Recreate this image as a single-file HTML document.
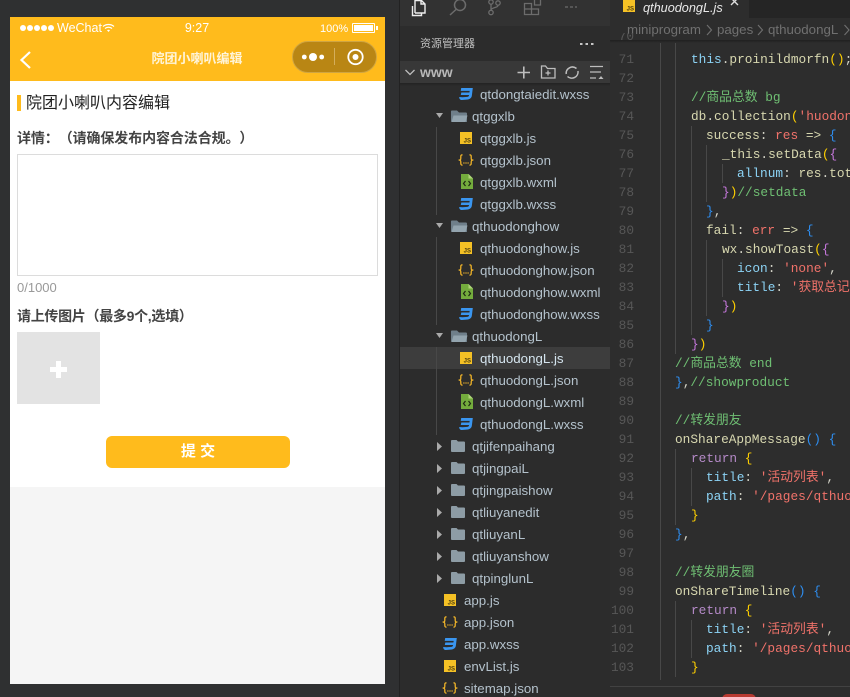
<!DOCTYPE html>
<html><head><meta charset="utf-8">
<style>
html,body{margin:0;padding:0;width:850px;height:697px;overflow:hidden;background:#2f3031}
*{box-sizing:border-box}
.a{position:absolute}
body{font-family:"Liberation Sans","Noto Sans CJK SC",sans-serif;position:relative;text-spacing-trim:space-all}
.t{position:absolute;white-space:nowrap;line-height:22px;height:20px;font-size:13.3px;color:#b4c2cc}
.ic{position:absolute;width:14px;height:14px}
.c{position:absolute;white-space:pre;font-family:"Liberation Mono","Noto Sans CJK SC",monospace;font-size:12.8px;line-height:19px;height:19px;color:#d4d4c8}
.n{position:absolute;left:600px;width:34px;text-align:right;font-family:"Liberation Mono",monospace;font-size:12.8px;line-height:19px;height:19px;color:#575757}
.g{position:absolute;width:1px;background:#484848}
.k{color:#b58ac8}.p{color:#8cd3f5}.s{color:#f0726a}.m{color:#6fbf73}.b{color:#2e8ef0}.y{color:#ffd000}.f{color:#d8d8b0}.v{color:#f0726a}.o{color:#c678dd}
.bc{position:absolute;top:20px;font-size:13.3px;line-height:20px;color:#707070;white-space:nowrap}
</style></head><body>
<svg width="0" height="0" style="position:absolute">
<symbol id="js" viewBox="0 0 12 12"><rect width="12" height="12" fill="#f5c125"/><text x="11" y="10.5" font-size="6" font-weight="bold" text-anchor="end" fill="#4a3c10" font-family="Liberation Sans">JS</text></symbol>
<symbol id="json" viewBox="0 0 16 12"><path d="M4.500 .8C2.500 .8 2.800 2 2.800 4S2.500 6 .6 6C2.500 6 2.800 6.500 2.800 8S2.500 11.200 4.500 11.200M11.500 .8C13.500 .8 13.200 2 13.200 4S13.500 6 15.400 6C13.500 6 13.200 6.500 13.200 8S13.500 11.200 11.500 11.200" fill="none" stroke="#f0b429" stroke-width="1.300"/><path d="M5.300 9h1.200M7.400 9h1.200M9.500 9h1.200" stroke="#f0b429" stroke-width="1.300"/></symbol>
<symbol id="wxml" viewBox="0 0 13 15"><path d="M1 0H8.500L13 4.500V15H1Z" fill="#74ac3d"/><path d="M8.500 0L13 4.500H8.500Z" fill="#b0d67a"/><path d="M5.500 7L3.500 9.500L5.500 12M8.500 7L10.500 9.500L8.500 12" fill="none" stroke="#1d2a10" stroke-width="1.200"/></symbol>
<symbol id="css" viewBox="0 0 14 12"><path d="M2.200 0H13.800L12.800 8C12.500 9.700 11 11 9 11.500L3 12C1.300 12 .2 11 .2 9L3.600 9.200L8.500 8.900C9.500 8.700 9.800 8.300 9.900 7.800L10.100 7H1.800L2.300 4.500H10.400L10.700 2.900H1.700Z" fill="#3a96f0"/></symbol>
<symbol id="fo" viewBox="0 0 18 13"><path d="M1 1.500C1 .8 1.500.5 2 .5H7L9 2.500H16C16.600 2.500 17 3 17 3.500V12H2C1.400 12 1 11.600 1 11Z" fill="#6f7f8a"/><path d="M3.500 5.500H17.500L15.500 12H1.500Z" fill="#93a4ae"/></symbol>
<symbol id="fc" viewBox="0 0 14 12"><path d="M0 1C0 .4.400 0 1 0H5.500L7 1.500H13C13.600 1.500 14 2 14 2.500V11C14 11.600 13.600 12 13 12H1C.4 12 0 11.600 0 11Z" fill="#8d9ca5"/></symbol>
</svg>

<!-- phone -->
<div class="a" style="left:10px;top:17px;width:375px;height:667px;background:#f5f5f5"></div>
<div class="a" style="left:10px;top:17px;width:375px;height:470px;background:#fff"></div>
<div class="a" style="left:10px;top:17px;width:375px;height:64px;background:#ffbb1c"></div>
<svg class="a" style="left:20px;top:24px" width="35" height="8"><circle cx="3" cy="4" r="3" fill="#fff"/><circle cx="10" cy="4" r="3" fill="#fff"/><circle cx="17" cy="4" r="3" fill="#fff"/><circle cx="24" cy="4" r="3" fill="#fff"/><circle cx="31" cy="4" r="3" fill="#fff"/></svg>
<div class="a" style="left:57px;top:20px;font-size:12.500px;line-height:16px;color:#fff">WeChat</div>
<svg class="a" style="left:102px;top:23px" width="13" height="10" viewBox="0 0 13 10" fill="none" stroke="#fff" stroke-width="1.200"><path d="M1 3.500C4 .8 9 .8 12 3.500M3 5.500C5 3.800 8 3.800 10 5.500"/><path d="M5 7.300C6 6.500 7 6.500 8 7.300L6.500 9Z" fill="#fff" stroke="none"/></svg>
<div class="a" style="left:177px;top:20px;width:40px;text-align:center;font-size:12.500px;line-height:16px;color:#fff">9:27</div>
<div class="a" style="left:320px;top:21px;font-size:11px;line-height:16px;color:#fff">100%</div>
<div class="a" style="left:352px;top:23px;width:23px;height:10px;border:1px solid #fff;padding:1px;border-radius:1px"><div style="width:100%;height:100%;background:#fff"></div></div>
<div class="a" style="left:376px;top:26px;width:2px;height:4px;background:#fff"></div>
<svg class="a" style="left:18px;top:50px" width="14" height="20" viewBox="0 0 14 20" fill="none" stroke="#fff" stroke-width="2.200"><path d="M12 2L3.500 10L12 18"/></svg>
<div class="a" style="left:97px;top:49px;width:200px;text-align:center;font-size:13px;font-weight:bold;line-height:20px;color:#fff4d8">院团小喇叭编辑</div>
<div class="a" style="left:292px;top:41px;width:85px;height:32px;border-radius:16px;background:#b98614;border:1px solid #cfa542"></div>
<svg class="a" style="left:300px;top:47px" width="70" height="20" viewBox="0 0 70 20"><circle cx="4.300" cy="10" r="2.400" fill="#fff"/><circle cx="13" cy="10" r="4" fill="#fff"/><circle cx="21.700" cy="10" r="2.400" fill="#fff"/><path d="M34.500 1V18" stroke="#d4ae5b"/><circle cx="55.500" cy="10" r="7.200" fill="none" stroke="#fff" stroke-width="1.800"/><circle cx="55.500" cy="10" r="3" fill="#fff"/></svg>

<div class="a" style="left:17px;top:95px;width:4px;height:16px;background:#ffbb1c"></div>
<div class="a" style="left:26px;top:93px;font-size:16px;line-height:22px;color:#222;white-space:nowrap">院团小喇叭内容编辑</div>
<div class="a" style="left:17px;top:128px;font-size:14px;font-weight:bold;line-height:20px;color:#444;white-space:nowrap;letter-spacing:-.1px">详情：（请确保发布内容合法合规。）</div>
<div class="a" style="left:17px;top:154px;width:361px;height:122px;border:1px solid #dcdcdc;background:#fff"></div>
<div class="a" style="left:17px;top:279px;font-size:13px;line-height:18px;color:#999">0/1000</div>
<div class="a" style="left:17px;top:306px;font-size:14px;font-weight:bold;line-height:20px;color:#444;white-space:nowrap;letter-spacing:-.3px">请上传图片（最多9个,选填）</div>
<div class="a" style="left:17px;top:332px;width:83px;height:72px;background:#e3e3e3"></div>
<div class="a" style="left:50px;top:367px;width:17px;height:5px;background:#fff"></div>
<div class="a" style="left:56px;top:361px;width:5px;height:17px;background:#fff"></div>
<div class="a" style="left:106px;top:436px;width:184px;height:32px;border-radius:6px;background:#ffbb1c;color:#fff;font-size:15px;font-weight:bold;line-height:32px;text-align:center">提 交</div>

<!-- sidebar -->
<div class="a" style="left:400px;top:0;width:210px;height:697px;background:#2c2c2c"></div>
<div class="a" style="left:399px;top:0;width:1px;height:697px;background:#222"></div>
<div class="a" style="left:400px;top:0;width:212px;height:26px;background:#323232"></div>
<div class="a" style="left:400px;top:61px;width:210px;height:22px;background:#383838"></div>
<div class="a" style="left:400px;top:83px;width:210px;height:3px;background:linear-gradient(#222,#2c2c2c)"></div>
<div class="a" style="left:400px;top:347px;width:210px;height:22px;background:#3d3d3d"></div>
<svg class="a" style="left:400px;top:0" width="200" height="20" viewBox="0 0 200 20" fill="none">
<path d="M12.500 6V15.500H21.500V13M15 13V.5H21.500L25 4V13H15M21 0V4H25" stroke="#eee" stroke-width="1.400"/>
<circle cx="60" cy="5" r="5.500" stroke="#6c6c6c" stroke-width="1.500"/><path d="M56 9.500L50 15" stroke="#6c6c6c" stroke-width="1.500"/>
<circle cx="91" cy="2" r="2.200" stroke="#6c6c6c" stroke-width="1.300"/><circle cx="91" cy="12.500" r="2.200" stroke="#6c6c6c" stroke-width="1.300"/><circle cx="98" cy="3" r="2.200" stroke="#6c6c6c" stroke-width="1.300"/><path d="M91 4.500V10M98 5.500C98 8 92 7 91 10" stroke="#6c6c6c" stroke-width="1.300"/>
<path d="M124.500 3.500H131.500V14.500H124.500ZM124.500 9H138.500V14.500H124.500ZM131.500 9V14.500M134.500 -1H140.500V5H134.500Z" stroke="#6c6c6c" stroke-width="1.300"/>
<path d="M165 7H168M170 7H173M175 7H177" stroke="#6c6c6c" stroke-width="1.300"/>
</svg>
<div class="a" style="left:420px;top:35px;font-size:11px;line-height:18px;color:#c0c0c0;white-space:nowrap">资源管理器</div>
<svg class="a" style="left:580px;top:42px" width="14" height="4"><path d="M0 2H2.500M5.500 2H8M11 2H13.500" stroke="#ddd" stroke-width="1.700"/></svg>
<svg class="a" style="left:400px;top:61px" width="210" height="22" viewBox="0 0 210 22" fill="none" stroke="#bdbdbd" stroke-width="1.300">
<path d="M5.500 9L10 13.500L14.500 9"/>
<path d="M117.500 11.500H130M123.800 5.500V17.500" stroke-width="1.600"/>
<path d="M141.500 5V17H155V7.500H147.500L145.500 5ZM148 9.500V14.500M145.500 12H150.500"/>
<path d="M176.500 7.500A6.300 6.300 0 0 0 166.200 13M167.500 15.500A6.300 6.300 0 0 0 178 10" stroke-width="1.500"/>
<path d="M190 5.500H203M190 11H201M190 17H196"/><path d="M198.500 18H203.500L201 15Z" fill="#bdbdbd" stroke="none"/>
</svg>
<div class="a" style="left:420px;top:62px;font-size:14px;font-weight:bold;line-height:20px;color:#b8b8b8">www</div>

<div class="g" style="left:436px;top:127px;height:88px"></div>
<div class="g" style="left:436px;top:237px;height:88px"></div>
<div class="g" style="left:436px;top:347px;height:88px"></div>

<!-- tree -->
<svg class="ic" style="left:459px;top:88px;height:12px"><use href="#css"/></svg><div class="t" style="left:480px;top:84px">qtdongtaiedit.wxss</div>

<svg class="a" style="left:435px;top:113px" width="9" height="6"><path d="M1 0H8L4.500 5Z" fill="#aaa"/></svg><svg class="a" style="left:450px;top:110px" width="18" height="13"><use href="#fo"/></svg><div class="t" style="left:472px;top:106px">qtggxlb</div>
<svg class="ic" style="left:460px;top:132px;width:12px;height:12px"><use href="#js"/></svg><div class="t" style="left:480px;top:128px">qtggxlb.js</div>
<svg class="ic" style="left:458px;top:154px;width:16px;height:12px"><use href="#json"/></svg><div class="t" style="left:480px;top:150px">qtggxlb.json</div>
<svg class="ic" style="left:460px;top:174px;width:13px;height:15px"><use href="#wxml"/></svg><div class="t" style="left:480px;top:172px">qtggxlb.wxml</div>
<svg class="ic" style="left:459px;top:198px;height:12px"><use href="#css"/></svg><div class="t" style="left:480px;top:194px">qtggxlb.wxss</div>

<svg class="a" style="left:435px;top:223px" width="9" height="6"><path d="M1 0H8L4.500 5Z" fill="#aaa"/></svg><svg class="a" style="left:450px;top:220px" width="18" height="13"><use href="#fo"/></svg><div class="t" style="left:472px;top:216px">qthuodonghow</div>
<svg class="ic" style="left:460px;top:242px;width:12px;height:12px"><use href="#js"/></svg><div class="t" style="left:480px;top:238px">qthuodonghow.js</div>
<svg class="ic" style="left:458px;top:264px;width:16px;height:12px"><use href="#json"/></svg><div class="t" style="left:480px;top:260px">qthuodonghow.json</div>
<svg class="ic" style="left:460px;top:284px;width:13px;height:15px"><use href="#wxml"/></svg><div class="t" style="left:480px;top:282px">qthuodonghow.wxml</div>
<svg class="ic" style="left:459px;top:308px;height:12px"><use href="#css"/></svg><div class="t" style="left:480px;top:304px">qthuodonghow.wxss</div>

<svg class="a" style="left:435px;top:333px" width="9" height="6"><path d="M1 0H8L4.500 5Z" fill="#aaa"/></svg><svg class="a" style="left:450px;top:330px" width="18" height="13"><use href="#fo"/></svg><div class="t" style="left:472px;top:326px">qthuodongL</div>
<svg class="ic" style="left:460px;top:352px;width:12px;height:12px"><use href="#js"/></svg><div class="t" style="left:480px;top:348px;color:#d4e4ee">qthuodongL.js</div>
<svg class="ic" style="left:458px;top:374px;width:16px;height:12px"><use href="#json"/></svg><div class="t" style="left:480px;top:370px">qthuodongL.json</div>
<svg class="ic" style="left:460px;top:394px;width:13px;height:15px"><use href="#wxml"/></svg><div class="t" style="left:480px;top:392px">qthuodongL.wxml</div>
<svg class="ic" style="left:459px;top:418px;height:12px"><use href="#css"/></svg><div class="t" style="left:480px;top:414px">qthuodongL.wxss</div>

<svg class="a" style="left:437px;top:442px" width="6" height="9"><path d="M0 0L5 4.500L0 9Z" fill="#aaa"/></svg><svg class="a" style="left:451px;top:440px;" width="14" height="12"><use href="#fc"/></svg><div class="t" style="left:472px;top:436px">qtjifenpaihang</div>
<svg class="a" style="left:437px;top:464px" width="6" height="9"><path d="M0 0L5 4.500L0 9Z" fill="#aaa"/></svg><svg class="a" style="left:451px;top:462px;" width="14" height="12"><use href="#fc"/></svg><div class="t" style="left:472px;top:458px">qtjingpaiL</div>
<svg class="a" style="left:437px;top:486px" width="6" height="9"><path d="M0 0L5 4.500L0 9Z" fill="#aaa"/></svg><svg class="a" style="left:451px;top:484px;" width="14" height="12"><use href="#fc"/></svg><div class="t" style="left:472px;top:480px">qtjingpaishow</div>
<svg class="a" style="left:437px;top:508px" width="6" height="9"><path d="M0 0L5 4.500L0 9Z" fill="#aaa"/></svg><svg class="a" style="left:451px;top:506px;" width="14" height="12"><use href="#fc"/></svg><div class="t" style="left:472px;top:502px">qtliuyanedit</div>
<svg class="a" style="left:437px;top:530px" width="6" height="9"><path d="M0 0L5 4.500L0 9Z" fill="#aaa"/></svg><svg class="a" style="left:451px;top:528px;" width="14" height="12"><use href="#fc"/></svg><div class="t" style="left:472px;top:524px">qtliuyanL</div>
<svg class="a" style="left:437px;top:552px" width="6" height="9"><path d="M0 0L5 4.500L0 9Z" fill="#aaa"/></svg><svg class="a" style="left:451px;top:550px;" width="14" height="12"><use href="#fc"/></svg><div class="t" style="left:472px;top:546px">qtliuyanshow</div>
<svg class="a" style="left:437px;top:574px" width="6" height="9"><path d="M0 0L5 4.500L0 9Z" fill="#aaa"/></svg><svg class="a" style="left:451px;top:572px;" width="14" height="12"><use href="#fc"/></svg><div class="t" style="left:472px;top:568px">qtpinglunL</div>

<svg class="ic" style="left:444px;top:594px;width:12px;height:12px"><use href="#js"/></svg><div class="t" style="left:464px;top:590px">app.js</div>
<svg class="ic" style="left:442px;top:616px;width:16px;height:12px"><use href="#json"/></svg><div class="t" style="left:464px;top:612px">app.json</div>
<svg class="ic" style="left:443px;top:638px;height:12px"><use href="#css"/></svg><div class="t" style="left:464px;top:634px">app.wxss</div>
<svg class="ic" style="left:444px;top:660px;width:12px;height:12px"><use href="#js"/></svg><div class="t" style="left:464px;top:656px">envList.js</div>
<svg class="ic" style="left:442px;top:682px;width:16px;height:12px"><use href="#json"/></svg><div class="t" style="left:464px;top:678px">sitemap.json</div>

<!-- editor -->
<div class="a" style="left:610px;top:0;width:240px;height:697px;background:#2d2d2d"></div>
<div class="a" style="left:610px;top:0;width:240px;height:18px;background:#252525"></div>
<div class="a" style="left:610px;top:0;width:139px;height:18px;background:#2d2d2d"></div>
<svg class="a" style="left:623px;top:0" width="12" height="12" viewBox="0 0 12 12"><use href="#js"/></svg>
<div class="a" style="left:643px;top:-1px;font-size:12.700px;line-height:18px;font-style:italic;color:#e8e8e8;white-space:nowrap">qthuodongL.js</div>
<svg class="a" style="left:730px;top:0" width="10" height="7"><path d="M1-2L8 5M8-2L1 5" stroke="#ddd" stroke-width="1.400"/></svg>
<div class="bc" style="left:627px">miniprogram</div><div class="bc" style="left:717px">pages</div><div class="bc" style="left:768px">qthuodongL</div>
<svg class="a" style="left:700px;top:20px" width="150" height="20" fill="none" stroke="#707070" stroke-width="1.100"><path d="M7 5L11.500 10L7 15M58 5L62.500 10L58 15M144.500 5L149 10L144.500 15"/></svg>
<div class="a" style="left:610px;top:40px;width:240px;height:3px;background:linear-gradient(#202020,#2d2d2d)"></div>

<div class="n" style="top:33px;height:10px;overflow:hidden"><span style="position:relative;top:-6px">70</span></div>
<div class="g" style="left:660px;top:43px;height:637px"></div>
<div class="g" style="left:675px;top:43px;height:311px"></div>
<div class="g" style="left:691px;top:126px;height:209px"></div>
<div class="g" style="left:706px;top:145px;height:57px"></div>
<div class="g" style="left:706px;top:240px;height:76px"></div>
<div class="g" style="left:722px;top:164px;height:19px"></div>
<div class="g" style="left:722px;top:259px;height:38px"></div>
<div class="g" style="left:675px;top:449px;height:76px"></div>
<div class="g" style="left:691px;top:468px;height:38px"></div>
<div class="g" style="left:675px;top:601px;height:76px"></div>
<div class="g" style="left:691px;top:620px;height:38px"></div>
<div class="a" style="left:610px;top:686px;width:240px;height:1px;background:#424242"></div>
<div class="a" style="left:722px;top:694px;width:34px;height:6px;border-radius:5px 5px 0 0;background:#b83a32"></div>

<div class="n" style="top:50px">71</div><div class="c" style="left:691px;top:50px"><span class="p">this</span>.<span class="f">proinildmorfn</span><span class="y">()</span>;</div>
<div class="n" style="top:69px">72</div>
<div class="n" style="top:88px">73</div><div class="c m" style="left:691px;top:88px">//商品总数 bg</div>
<div class="n" style="top:107px">74</div><div class="c" style="left:691px;top:107px"><span class="f">db</span>.<span class="f">collection</span><span class="y">(</span><span class="s">'huodon</span></div>
<div class="n" style="top:126px">75</div><div class="c" style="left:706px;top:126px"><span class="f">success</span>: <span class="v">res</span> <span class="f">=&gt;</span> <span class="b">{</span></div>
<div class="n" style="top:145px">76</div><div class="c" style="left:722px;top:145px"><span class="f">_this</span>.<span class="f">setData</span><span class="y">(</span><span class="o">{</span></div>
<div class="n" style="top:164px">77</div><div class="c" style="left:737px;top:164px"><span class="p">allnum</span>: <span class="f">res</span>.<span class="f">tot</span></div>
<div class="n" style="top:183px">78</div><div class="c" style="left:722px;top:183px"><span class="o">}</span><span class="y">)</span><span class="m">//setdata</span></div>
<div class="n" style="top:202px">79</div><div class="c" style="left:706px;top:202px"><span class="b">}</span>,</div>
<div class="n" style="top:221px">80</div><div class="c" style="left:706px;top:221px"><span class="f">fail</span>: <span class="v">err</span> <span class="f">=&gt;</span> <span class="b">{</span></div>
<div class="n" style="top:240px">81</div><div class="c" style="left:722px;top:240px"><span class="f">wx</span>.<span class="f">showToast</span><span class="y">(</span><span class="o">{</span></div>
<div class="n" style="top:259px">82</div><div class="c" style="left:737px;top:259px"><span class="p">icon</span>: <span class="s">'none'</span>,</div>
<div class="n" style="top:278px">83</div><div class="c" style="left:737px;top:278px"><span class="p">title</span>: <span class="s">'获取总记</span></div>
<div class="n" style="top:297px">84</div><div class="c" style="left:722px;top:297px"><span class="o">}</span><span class="y">)</span></div>
<div class="n" style="top:316px">85</div><div class="c b" style="left:706px;top:316px">}</div>
<div class="n" style="top:335px">86</div><div class="c" style="left:691px;top:335px"><span class="o">}</span><span class="y">)</span></div>
<div class="n" style="top:354px">87</div><div class="c m" style="left:675px;top:354px">//商品总数 end</div>
<div class="n" style="top:373px">88</div><div class="c" style="left:675px;top:373px"><span class="b">}</span>,<span class="m">//showproduct</span></div>
<div class="n" style="top:392px">89</div>
<div class="n" style="top:411px">90</div><div class="c m" style="left:675px;top:411px">//转发朋友</div>
<div class="n" style="top:430px">91</div><div class="c" style="left:675px;top:430px"><span class="f">onShareAppMessage</span><span class="b">()</span> <span class="b">{</span></div>
<div class="n" style="top:449px">92</div><div class="c" style="left:691px;top:449px"><span class="k">return</span> <span class="y">{</span></div>
<div class="n" style="top:468px">93</div><div class="c" style="left:706px;top:468px"><span class="p">title</span>: <span class="s">'活动列表'</span>,</div>
<div class="n" style="top:487px">94</div><div class="c" style="left:706px;top:487px"><span class="p">path</span>: <span class="s">'/pages/qthuo</span></div>
<div class="n" style="top:506px">95</div><div class="c y" style="left:691px;top:506px">}</div>
<div class="n" style="top:525px">96</div><div class="c" style="left:675px;top:525px"><span class="b">}</span>,</div>
<div class="n" style="top:544px">97</div>
<div class="n" style="top:563px">98</div><div class="c m" style="left:675px;top:563px">//转发朋友圈</div>
<div class="n" style="top:582px">99</div><div class="c" style="left:675px;top:582px"><span class="f">onShareTimeline</span><span class="b">()</span> <span class="b">{</span></div>
<div class="n" style="top:601px">100</div><div class="c" style="left:691px;top:601px"><span class="k">return</span> <span class="y">{</span></div>
<div class="n" style="top:620px">101</div><div class="c" style="left:706px;top:620px"><span class="p">title</span>: <span class="s">'活动列表'</span>,</div>
<div class="n" style="top:639px">102</div><div class="c" style="left:706px;top:639px"><span class="p">path</span>: <span class="s">'/pages/qthuo</span></div>
<div class="n" style="top:658px">103</div><div class="c y" style="left:691px;top:658px">}</div>
</body></html>
